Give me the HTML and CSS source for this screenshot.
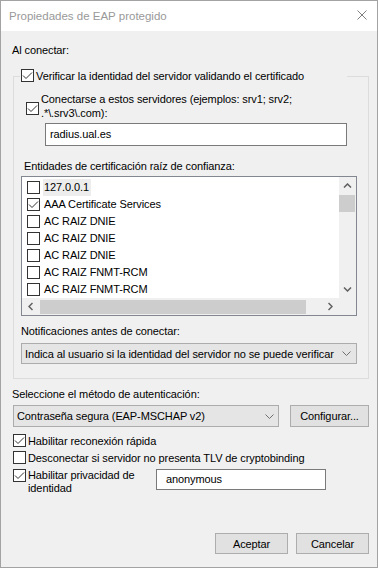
FILE: index.html
```html
<!DOCTYPE html>
<html lang="es">
<head>
  <meta charset="UTF-8">
  <meta name="viewport" content="width=device-width, initial-scale=1.0">
  <title>Propiedades de EAP protegido</title>
  <link rel="stylesheet" href="styles.css">
</head>
<body>

  <div id="dialog">
    <div class="titlebar">
      <span class="title">Propiedades de EAP protegido</span>
      <svg class="close" width="10" height="10" viewBox="0 0 10 10">
        <path d="M0.5 0.5L9.5 9.5M9.5 0.5L0.5 9.5" stroke="#7f7f7f" stroke-width="1" fill="none"/>
      </svg>
    </div>

    <div class="content">
      <div class="label">Al conectar:</div>

      <div class="group">
        <div class="check legend">
          <span class="box"><svg width="11" height="11" viewBox="0 0 11 11"><polyline points="1,5.5 4,8.5 10,2.5" fill="none" stroke="#333" stroke-width="1"/></svg></span>
          <span>Verificar la identidad del servidor validando el certificado</span>
        </div>

        <div class="check servers">
          <span class="box"><svg width="11" height="11" viewBox="0 0 11 11"><polyline points="1,5.5 4,8.5 10,2.5" fill="none" stroke="#333" stroke-width="1"/></svg></span>
          <span>Conectarse a estos servidores (ejemplos: srv1; srv2;<br>.*\.srv3\.com):</span>
        </div>

        <div class="textbox servers-input">radius.ual.es</div>

        <div class="label roots-label">Entidades de certificación raíz de confianza:</div>

        <div class="listbox">
          <div class="list-items">
            <div class="list-row"><span class="box"></span><span class="item focused">127.0.0.1</span></div>
            <div class="list-row"><span class="box"><svg width="11" height="11" viewBox="0 0 11 11"><polyline points="1,5.5 4,8.5 10,2.5" fill="none" stroke="#333" stroke-width="1"/></svg></span><span class="item">AAA Certificate Services</span></div>
            <div class="list-row"><span class="box"></span><span class="item">AC RAIZ DNIE</span></div>
            <div class="list-row"><span class="box"></span><span class="item">AC RAIZ DNIE</span></div>
            <div class="list-row"><span class="box"></span><span class="item">AC RAIZ DNIE</span></div>
            <div class="list-row"><span class="box"></span><span class="item">AC RAIZ FNMT-RCM</span></div>
            <div class="list-row"><span class="box"></span><span class="item">AC RAIZ FNMT-RCM</span></div>
          </div>

          <div class="vscroll">
            <div class="arrow-btn"><svg width="9" height="5" viewBox="0 0 9 5"><polyline points="1,4.5 4.5,1 8,4.5" fill="none" stroke="#606060" stroke-width="1.5"/></svg></div>
            <div class="vthumb"></div>
            <div class="track"></div>
            <div class="arrow-btn"><svg width="9" height="5" viewBox="0 0 9 5"><polyline points="1,0.5 4.5,4 8,0.5" fill="none" stroke="#606060" stroke-width="1.5"/></svg></div>
          </div>

          <div class="hscroll">
            <div class="arrow-btn"><svg width="5" height="9" viewBox="0 0 5 9"><polyline points="4.5,1 1,4.5 4.5,8" fill="none" stroke="#606060" stroke-width="1.5"/></svg></div>
            <div class="hthumb"></div>
            <div class="track"></div>
            <div class="arrow-btn"><svg width="5" height="9" viewBox="0 0 5 9"><polyline points="0.5,1 4,4.5 0.5,8" fill="none" stroke="#606060" stroke-width="1.5"/></svg></div>
          </div>

          <div class="corner"></div>
        </div>

        <div class="label notify-label">Notificaciones antes de conectar:</div>

        <div class="combo notify-combo">
          <span>Indica al usuario si la identidad del servidor no se puede verificar</span>
          <svg width="9" height="5" viewBox="0 0 9 5"><polyline points="0.5,0.5 4.5,4.5 8.5,0.5" fill="none" stroke="#707070" stroke-width="1"/></svg>
        </div>
      </div>

      <div class="label method-label">Seleccione el método de autenticación:</div>

      <div class="method-row">
        <div class="combo method-combo">
          <span>Contraseña segura (EAP-MSCHAP v2)</span>
          <svg width="9" height="5" viewBox="0 0 9 5"><polyline points="0.5,0.5 4.5,4.5 8.5,0.5" fill="none" stroke="#707070" stroke-width="1"/></svg>
        </div>
        <div class="button config">Configurar...</div>
      </div>

      <div class="check option">
        <span class="box"><svg width="11" height="11" viewBox="0 0 11 11"><polyline points="1,5.5 4,8.5 10,2.5" fill="none" stroke="#333" stroke-width="1"/></svg></span>
        <span>Habilitar reconexión rápida</span>
      </div>

      <div class="check option">
        <span class="box"></span>
        <span>Desconectar si servidor no presenta TLV de cryptobinding</span>
      </div>

      <div class="privacy-row">
        <div class="check privacy">
          <span class="box"><svg width="11" height="11" viewBox="0 0 11 11"><polyline points="1,5.5 4,8.5 10,2.5" fill="none" stroke="#333" stroke-width="1"/></svg></span>
          <span>Habilitar privacidad de<br>identidad</span>
        </div>
        <div class="textbox identity-input">anonymous</div>
      </div>

      <div class="footer">
        <div class="button">Aceptar</div>
        <div class="button">Cancelar</div>
      </div>
    </div>
  </div>

</body>
</html>
```

FILE: styles.css
```css
body {
  margin: 0;
  background-color: #f0f0f0;
  font-family: "Liberation Sans", Arial, sans-serif;
  font-size: 11px;
  letter-spacing: -0.1px;
  color: #000;
}

#dialog {
  width: 378px;
  height: 568px;
  box-sizing: border-box;
  border: 1px solid #a3a3a3;
  display: flex;
  flex-direction: column;
  background-color: #f0f0f0;
}

.titlebar {
  flex: none;
  height: 30px;
  background-color: #fff;
  display: flex;
  align-items: center;
  justify-content: space-between;
  padding: 0 10px 0 8px;
}

.title {
  font-size: 11.5px;
  color: #999;
  letter-spacing: 0;
}

.close {
  margin-bottom: 2px;
}

.content {
  flex: 1;
  display: flex;
  flex-direction: column;
  padding: 12px 8px 13px 11px;
}

.label {
  line-height: 15px;
}

/* checkboxes */
.check {
  display: flex;
  align-items: center;
}

.box {
  flex: none;
  width: 13px;
  height: 13px;
  box-sizing: border-box;
  border: 1px solid #333;
  background-color: #fff;
  margin-right: 2px;
}

.box svg {
  display: block;
}

/* group box */
.group {
  margin: 18px 0 0 1px;
  border: 1px solid #dcdcdc;
  padding-bottom: 14px;
}

.legend {
  height: 15px;
  width: 326px;
  margin: -9px 0 0 6px;
  padding-left: 1px;
  background-color: #f0f0f0;
}

.servers {
  align-items: flex-start;
  margin: 9px 0 0 12px;
  line-height: 14px;
}

.servers .box {
  margin-top: 10px;
}

.textbox {
  box-sizing: border-box;
  border: 1px solid #7a7a7a;
  background-color: #fff;
}

.servers-input {
  width: 302px;
  height: 23px;
  margin: 3px 0 0 31px;
  padding-left: 4px;
  line-height: 21px;
}

.roots-label {
  margin: 13px 0 0 10px;
}

/* certificate list */
.listbox {
  width: 336px;
  height: 140px;
  box-sizing: border-box;
  margin: 2px 0 0 7px;
  border: 1px solid #828790;
  background-color: #fff;
  display: grid;
  grid-template-columns: 1fr 17px;
  grid-template-rows: 1fr 17px;
}

.list-items {
  padding-top: 2px;
  overflow: hidden;
}

.list-row {
  height: 17px;
  display: flex;
  align-items: center;
  padding-left: 5px;
}

.list-row .box {
  margin-right: 3px;
}

.item {
  line-height: 17px;
  padding: 0 2px 0 1px;
  white-space: nowrap;
}

.item.focused {
  background-color: #ededed;
}

.vscroll {
  display: flex;
  flex-direction: column;
  background-color: #f0f0f0;
}

.hscroll {
  display: flex;
  background-color: #f0f0f0;
}

.arrow-btn {
  flex: none;
  width: 17px;
  height: 17px;
  display: flex;
  align-items: center;
  justify-content: center;
}

.arrow-btn svg {
  display: block;
}

.vthumb {
  flex: none;
  height: 17px;
  margin: 1px 1px 0 0;
  background-color: #cdcdcd;
}

.hthumb {
  flex: none;
  width: 266px;
  margin: 2px 0 1px 1px;
  background-color: #cdcdcd;
}

.track {
  flex: 1;
}

.corner {
  background-color: #f0f0f0;
}

.notify-label {
  margin: 8px 0 0 7px;
}

/* combo boxes and buttons */
.combo {
  box-sizing: border-box;
  height: 21px;
  border: 1px solid #acacac;
  background-color: #e5e5e5;
  display: flex;
  align-items: center;
  justify-content: space-between;
  white-space: nowrap;
}

.combo svg {
  flex: none;
}

.notify-combo {
  width: 336px;
  margin: 4px 0 0 7px;
  padding: 0 5px 0 3px;
}

.method-label {
  margin-top: 8px;
}

.method-row {
  display: flex;
  margin-top: 3px;
}

.method-combo {
  width: 266px;
  height: 22px;
  margin-left: 1px;
  padding: 0 4px 0 3px;
}

.button {
  box-sizing: border-box;
  border: 1px solid #adadad;
  background-color: #e1e1e1;
  display: flex;
  align-items: center;
  justify-content: center;
}

.config {
  width: 79px;
  height: 22px;
  margin-left: auto;
}

.option {
  height: 17px;
  margin: 5px 0 0 1px;
}

.option + .option {
  margin-top: 0;
}

.privacy-row {
  display: flex;
  align-items: flex-start;
  margin: 3px 0 0 1px;
}

.privacy {
  width: 143px;
  align-items: flex-start;
  line-height: 13px;
}

.identity-input {
  width: 170px;
  height: 21px;
  padding-left: 9px;
  line-height: 19px;
}

.footer {
  margin-top: auto;
  display: flex;
  justify-content: flex-end;
  gap: 8px;
}

.footer .button {
  width: 73px;
  height: 21px;
}
```
